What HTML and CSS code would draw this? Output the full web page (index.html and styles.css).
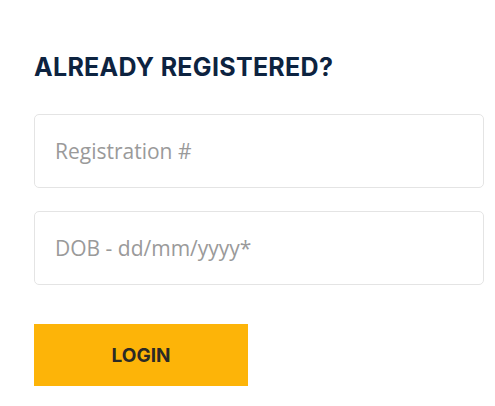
FILE: index.html
```html
<!DOCTYPE html>
<html lang="en">
<head>
    <meta charset="UTF-8">
    <meta name="viewport" content="width=device-width, initial-scale=1.0">
    <title>Already Registered</title>
    <link rel="stylesheet" href="styles.css">
</head>
<body>

    <div class="login-box">
        <h2>ALREADY REGISTERED?</h2>
        <form class="login-form">
            <input type="text" class="field" placeholder="Registration #">
            <input type="text" class="field" placeholder="DOB - dd/mm/yyyy*">
            <button type="button" class="btn-login">LOGIN</button>
        </form>
    </div>

</body>
</html>
```

FILE: styles.css
```css
/* --- page --- */
body {
    margin: 0;
    background-color: #ffffff;
    font-family: "Open Sans", "Liberation Sans", Arial, sans-serif;
}

/* --- login box --- */
.login-box {
    padding: 51px 11px 0 34px;
}

.login-box h2 {
    margin: 0 0 31px;
    font-family: Inter, "Noto Sans", sans-serif;
    font-size: 25px;
    font-weight: 700;
    letter-spacing: 0.3px;
    color: #0d2340;
    line-height: 32px;
}

.login-form {
    display: flex;
    flex-direction: column;
    align-items: flex-start;
    gap: 23px;
}

.field {
    width: 100%;
    height: 74px;
    box-sizing: border-box;
    border: 1px solid #e4e4e4;
    border-radius: 5px;
    padding: 0 20px;
    font-family: "Open Sans", sans-serif;
    font-size: 21px;
    color: #333333;
    outline: none;
}

.field::placeholder {
    color: #9a9a9a;
}

/* --- button --- */
.btn-login {
    margin-top: 16px;
    width: 214px;
    height: 62px;
    border: none;
    background-color: #fdb408;
    font-family: Inter, "Noto Sans", sans-serif;
    font-size: 19px;
    font-weight: 700;
    color: #2b2a26;
    cursor: pointer;
}
```
